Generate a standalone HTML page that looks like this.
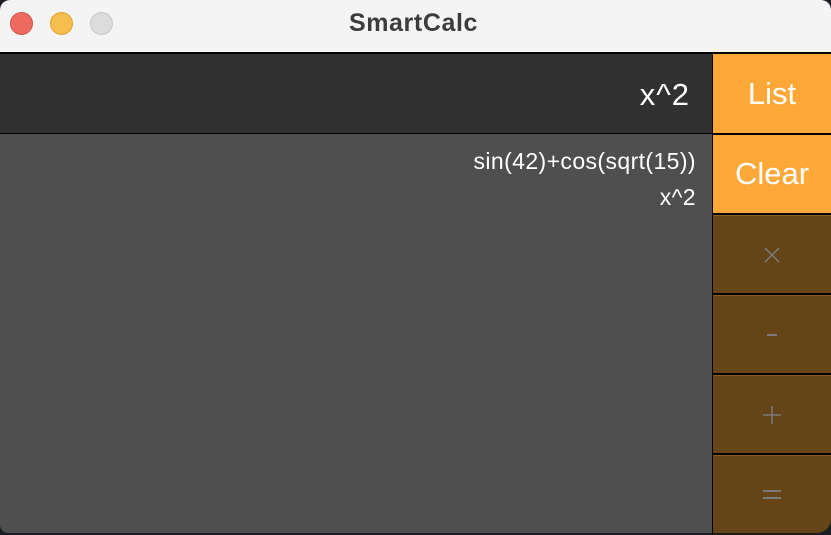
<html><head><style>
body{margin:0;width:831px;height:535px;background:#1a1d22;position:relative;overflow:hidden;font-family:"Liberation Sans",sans-serif}
.t{position:absolute;left:0;top:0;width:831px;height:52px;background:#f4f4f4;border-radius:10px 10px 0 0}
.c{position:absolute;top:12px;width:23px;height:23px;border-radius:50%;box-sizing:border-box}
.title{position:absolute;top:9px;left:0;width:827px;text-align:center;font-weight:bold;font-size:25px;letter-spacing:0.6px;color:#3c3c3c}
.d{position:absolute;left:0;top:54px;width:712px;height:79px;background:#313131;color:#fff;font-size:31px;text-align:right;box-sizing:border-box;padding-right:22px;line-height:82px;letter-spacing:1px}
.h{position:absolute;left:0;top:134px;width:712px;height:399px;background:#4f4f4f;color:#fff;font-size:23px;letter-spacing:0.4px;text-align:right;box-sizing:border-box;padding-right:16px;border-bottom-left-radius:8px}
.h div{height:36px;line-height:54px}
.sep{position:absolute;left:0;top:52px;width:831px;height:2px;background:#000}
.v{position:absolute;left:712px;top:54px;width:1px;height:480px;background:#000}
.b{position:absolute;left:713px;width:118px;display:flex;align-items:center;justify-content:center;font-size:31px}
.o{background:#ffa83a;color:#fff}
.br{background:#654418;color:#7a7a7a;border-top:1px solid #8a5e22;box-sizing:border-box;font-size:28px}
</style></head><body>
<div class="t"></div>
<div class="c" style="left:10px;background:#ee6a5f;border:1px solid #d4544a"></div>
<div class="c" style="left:50px;background:#f6be50;border:1px solid #dea236"></div>
<div class="c" style="left:90px;background:#dcdcdc;border:1px solid #c6c6c6"></div>
<div class="title">SmartCalc</div>
<div class="sep"></div>
<div class="d">x^2</div>
<div style="position:absolute;left:0;top:133px;width:712px;height:1px;background:#000"></div>
<div class="h"><div>sin(42)+cos(sqrt(15))</div><div>x^2</div></div>
<div class="v"></div>
<div class="b o" style="top:54px;height:79px">List</div>
<div style="position:absolute;left:713px;top:133px;width:118px;height:2px;background:#000"></div>
<div class="b o" style="top:135px;height:78px">Clear</div>
<div style="position:absolute;left:713px;top:213px;width:118px;height:2px;background:#000"></div>
<div class="b br" style="top:215px;height:78px"><svg width="20" height="20"><path d="M3 3L17 17M17 3L3 17" stroke="#7a7a7a" stroke-width="1.5"/></svg></div>
<div style="position:absolute;left:713px;top:293px;width:118px;height:2px;background:#000"></div>
<div class="b br" style="top:295px;height:78px"><svg width="20" height="20"><path d="M5 10H15" stroke="#7a7a7a" stroke-width="2"/></svg></div>
<div style="position:absolute;left:713px;top:373px;width:118px;height:2px;background:#000"></div>
<div class="b br" style="top:375px;height:78px"><svg width="20" height="20"><path d="M1 10H19M10 1V19" stroke="#7a7a7a" stroke-width="1.5"/></svg></div>
<div style="position:absolute;left:713px;top:453px;width:118px;height:2px;background:#000"></div>
<div class="b br" style="top:455px;height:78px;border-bottom-right-radius:14px"><svg width="20" height="20"><path d="M1 6H19M1 13H19" stroke="#7a7a7a" stroke-width="2"/></svg></div>
</body></html>
